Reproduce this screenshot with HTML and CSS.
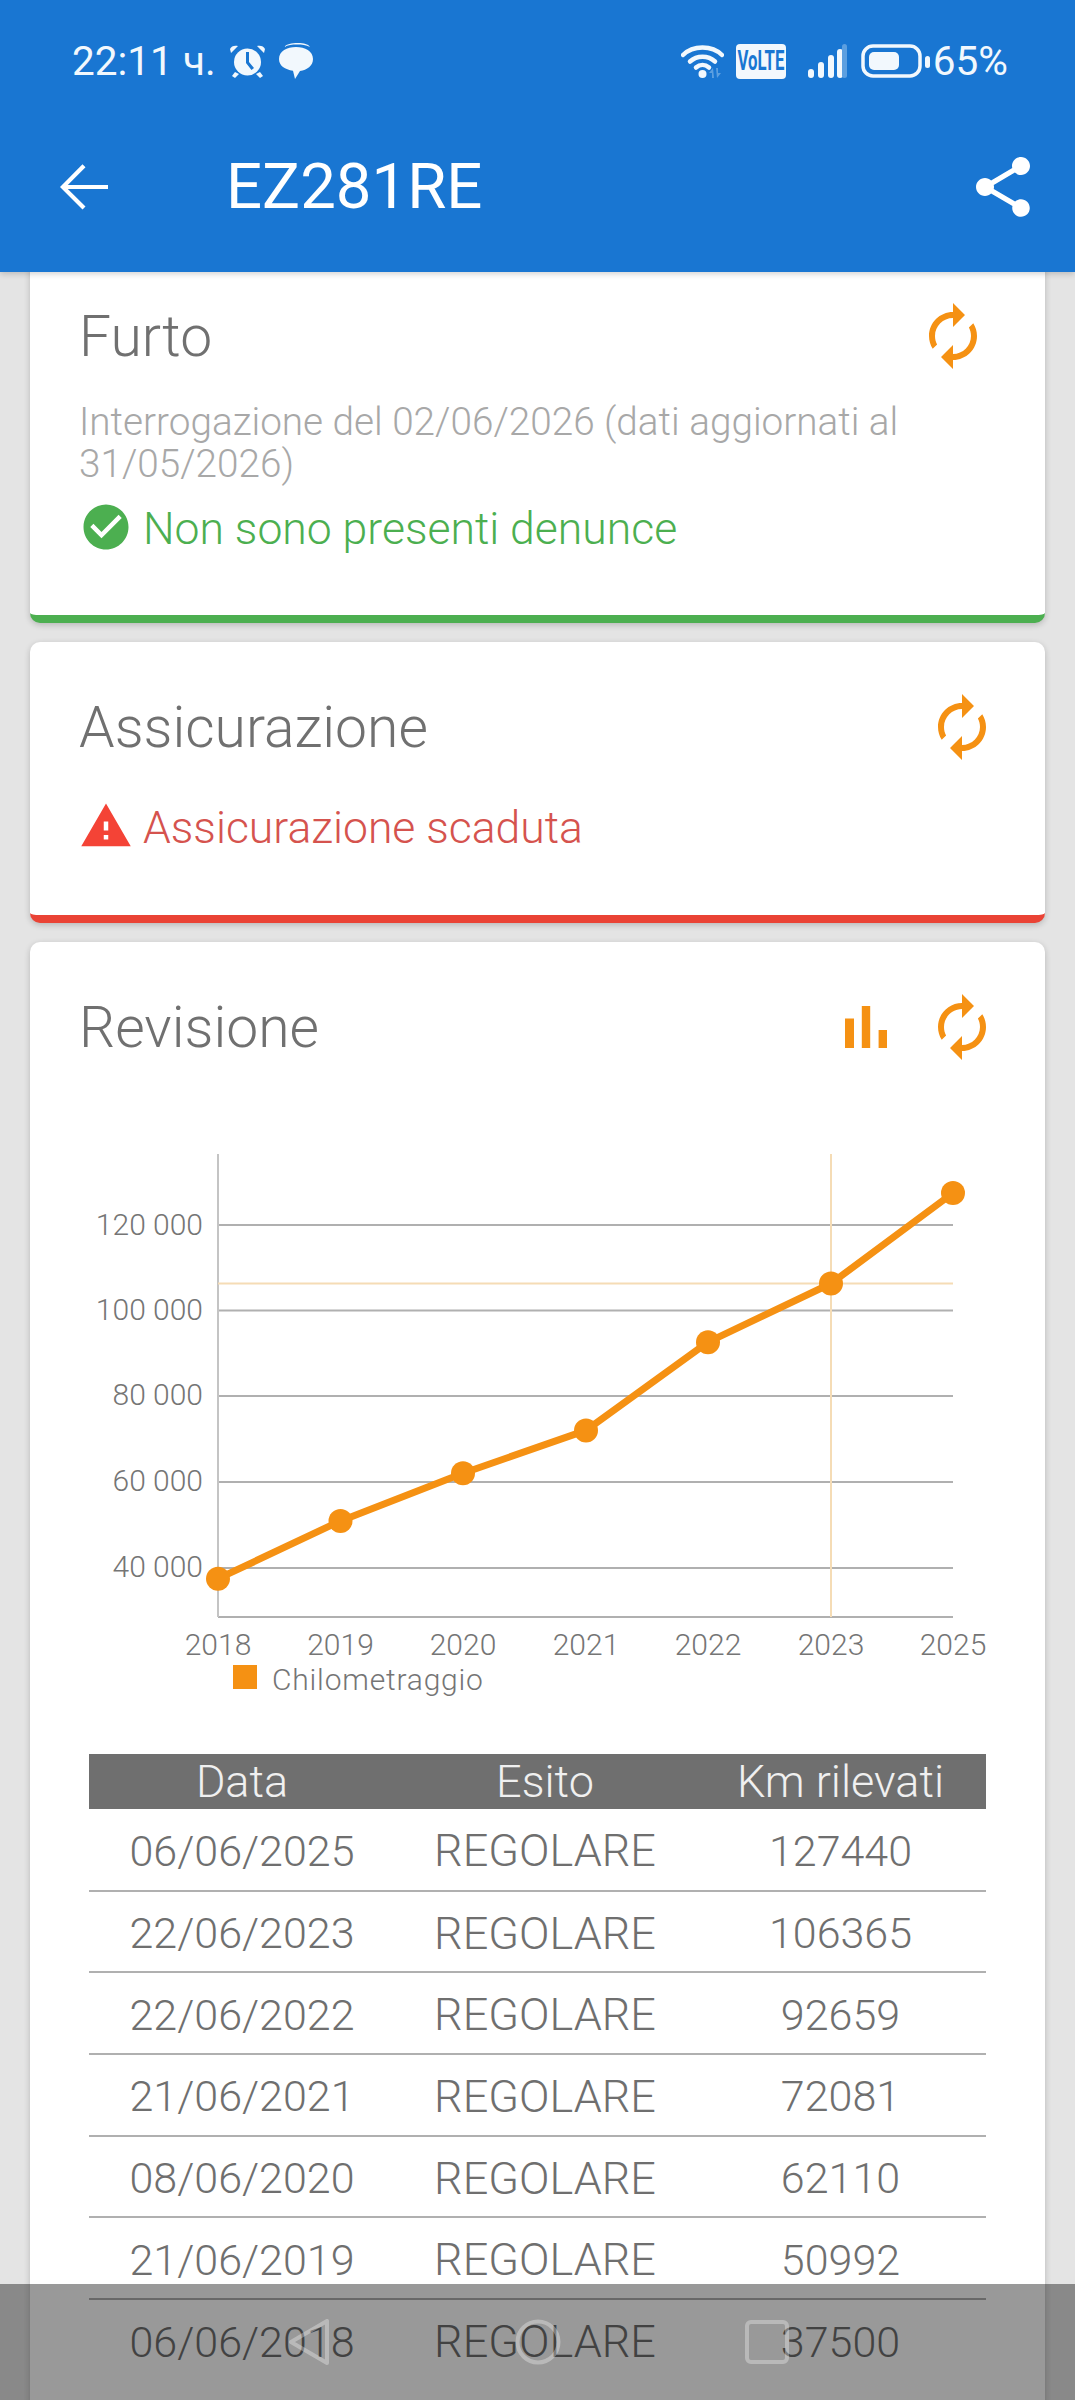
FILE: index.html
```html
<!DOCTYPE html>
<html lang="it">
<head>
<meta charset="utf-8">
<title>EZ281RE</title>
<link rel="stylesheet" href="styles.css">
</head>
<body>
<div class="screen">
  <header class="appbar">
    <div class="statusbar">
      <div class="status-left">
        <span class="status-text">22:11 ч.</span>
        <svg class="ic-alarm" viewBox="0 0 35 34"><path class="w" d="M1 9 8 2c-3-1-7 0-8 3zM34 9l-7-7c3-1 7 0 8 3z"/><circle class="w" cx="17.500" cy="18" r="13.500"/><path class="b" d="M16 8h3v10l5 6-2.500 2-5.500-7z"/><path class="w" d="M5 28l4 2-4 4-3-2zM30 28l-4 2 4 4 3-2z"/></svg>
        <svg class="ic-msg" viewBox="0 0 35 36"><path class="w" d="M6 4C9 1 13 0 20 0c6 0 10 1 12 4-4-2-8-2.500-13-2.500S10 2 6 4z"/><path class="w" d="M18 4c9 0 17 4 17 12 0 7-6 11-13 12l-5 8-2-8.300C7 26.500 1 23 1 16 1 8 9 4 18 4z"/></svg>
      </div>
      <div class="status-right">
        <svg class="ic-wifi" viewBox="0 0 43 34"><path class="wl" d="M2 11C12 1 31 1 41 11"/><path class="wl" d="M9 17.500C16 11 27 11 34 17.500"/><path class="wl" d="M15 23.500C19 20 24 20 28 23.500"/><circle class="w" cx="21.500" cy="30" r="4"/><path class="dim" d="M32 24l-4 5h3v5h2zM36 34l4-5h-3v-5h-2z"/></svg>
        <span class="volte"><span class="volte-text">VoLTE</span></span>
        <svg class="ic-signal" viewBox="0 0 39 34"><rect class="w" x="0" y="25" width="6" height="9" rx="3"/><rect class="w" x="10" y="18" width="6" height="16" rx="3"/><rect class="w" x="20" y="11" width="6" height="23" rx="3"/><rect class="w" x="29" y="5" width="6" height="29" rx="3"/><rect class="dim" x="34" y="0" width="5" height="34" rx="2.500"/></svg>
        <svg class="ic-battery" viewBox="0 0 69 34"><rect class="bl" x="2" y="2" width="57" height="30" rx="10"/><rect class="w" x="8" y="8" width="30" height="18" rx="5"/><rect class="w" x="64" y="12" width="5" height="12" rx="2.500"/></svg>
        <span class="status-text">65%</span>
      </div>
    </div>
    <div class="toolbar">
      <svg class="ic-back" viewBox="0 0 24 24"><path d="M20 11.300H6.600l5.900-5.900-1-1L4 12l7.500 7.500 1-1-5.900-5.800H20z"/></svg>
      <h1 class="plate">EZ281RE</h1>
      <svg class="ic-share" viewBox="0 0 24 24"><path d="M18 16.080c-.76 0-1.440.3-1.960.77L8.910 12.700c.05-.23.09-.46.09-.7s-.04-.47-.09-.7l7.050-4.110c.54.5 1.250.81 2.040.81 1.660 0 3-1.340 3-3s-1.340-3-3-3-3 1.340-3 3c0 .24.04.47.09.7L8.040 9.810C7.500 9.310 6.790 9 6 9c-1.660 0-3 1.340-3 3s1.340 3 3 3c.79 0 1.500-.31 2.040-.81l7.120 4.160c-.05.21-.08.43-.08.65 0 1.610 1.310 2.920 2.920 2.920 1.610 0 2.920-1.310 2.920-2.920s-1.310-2.920-2.920-2.920z"/></svg>
    </div>
  </header>

  <main class="content">
    <section class="card card-ok">
      <div class="card-head card-head-wide">
        <h2 class="card-title">Furto</h2>
        <svg class="ic-action" viewBox="0 0 24 24"><path d="M12 6v3l4-4-4-4v3c-4.420 0-8 3.580-8 8 0 1.570.46 3.030 1.240 4.260L6.700 14.800c-.45-.83-.7-1.790-.7-2.800 0-3.310 2.690-6 6-6zm6.760 1.740L17.300 9.200c.44.84.7 1.790.7 2.800 0 3.310-2.690 6-6 6v-3l-4 4 4 4v-3c4.420 0 8-3.580 8-8 0-1.570-.46-3.030-1.240-4.260z"/></svg>
      </div>
      <p class="card-note">Interrogazione del 02/06/2026 (dati aggiornati al 31/05/2026)</p>
      <div class="state state-ok">
        <svg class="ic-state" viewBox="0 0 24 24"><path d="M12 2C6.480 2 2 6.480 2 12s4.480 10 10 10 10-4.480 10-10S17.520 2 12 2zm-2 15l-5-5 1.410-1.410L10 14.170l7.590-7.590L19 8l-9 9z"/></svg>
        <span class="state-text">Non sono presenti denunce</span>
      </div>
    </section>

    <section class="card card-bad">
      <div class="card-head">
        <h2 class="card-title">Assicurazione</h2>
        <svg class="ic-action" viewBox="0 0 24 24"><path d="M12 6v3l4-4-4-4v3c-4.420 0-8 3.580-8 8 0 1.570.46 3.030 1.240 4.260L6.700 14.800c-.45-.83-.7-1.790-.7-2.800 0-3.310 2.690-6 6-6zm6.760 1.740L17.300 9.200c.44.84.7 1.790.7 2.800 0 3.310-2.690 6-6 6v-3l-4 4 4 4v-3c4.420 0 8-3.580 8-8 0-1.570-.46-3.030-1.240-4.260z"/></svg>
      </div>
      <div class="state state-bad">
        <svg class="ic-state" viewBox="0 0 24 24"><path d="M1 21h22L12 2 1 21zm12-3h-2v-2h2v2zm0-4h-2v-4h2v4z"/></svg>
        <span class="state-text">Assicurazione scaduta</span>
      </div>
    </section>

    <section class="card card-plain">
      <div class="card-head">
        <h2 class="card-title">Revisione</h2>
        <div class="actions">
          <svg class="ic-action" viewBox="0 0 24 24"><path d="M5 9.200h3V19H5zM10.600 5h2.800v14h-2.800zm5.600 8H19v6h-2.800z"/></svg>
          <svg class="ic-action" viewBox="0 0 24 24"><path d="M12 6v3l4-4-4-4v3c-4.420 0-8 3.580-8 8 0 1.570.46 3.030 1.240 4.260L6.700 14.800c-.45-.83-.7-1.790-.7-2.800 0-3.310 2.690-6 6-6zm6.760 1.740L17.300 9.200c.44.84.7 1.790.7 2.800 0 3.310-2.690 6-6 6v-3l-4 4 4 4v-3c4.420 0 8-3.580 8-8 0-1.570-.46-3.030-1.240-4.260z"/></svg>
        </div>
      </div>

      <svg class="chart" viewBox="30 1062 1015 691">
        <g class="grid">
          <line x1="218" x2="953" y1="1224" y2="1224"/>
          <line x1="218" x2="953" y1="1309.500" y2="1309.500"/>
          <line x1="218" x2="953" y1="1395" y2="1395"/>
          <line x1="218" x2="953" y1="1481" y2="1481"/>
          <line x1="218" x2="953" y1="1567" y2="1567"/>
          <line x1="218" x2="953" y1="1616" y2="1616"/>
          <line class="axis-y" x1="218" x2="218" y1="1153" y2="1616"/>
        </g>
        <g class="cross">
          <line x1="218" x2="953" y1="1282.500" y2="1282.500"/>
          <line x1="831" x2="831" y1="1153" y2="1616"/>
        </g>
        <polyline class="series" points="218,1577.700 340.500,1519.900 463,1472.200 586,1429.400 708,1341.200 831,1282.500 953,1192"/>
        <g class="dots">
          <circle cx="218" cy="1577.700" r="12"/>
          <circle cx="340.500" cy="1519.900" r="12"/>
          <circle cx="463" cy="1472.200" r="12"/>
          <circle cx="586" cy="1429.400" r="12"/>
          <circle cx="708" cy="1341.200" r="12"/>
          <circle cx="831" cy="1282.500" r="12"/>
          <circle cx="953" cy="1192" r="12"/>
        </g>
        <g class="labels labels-y">
          <text x="203" y="1234">120 000</text>
          <text x="203" y="1319">100 000</text>
          <text x="203" y="1404">80 000</text>
          <text x="203" y="1490">60 000</text>
          <text x="203" y="1576">40 000</text>
        </g>
        <g class="labels labels-x">
          <text x="218" y="1654">2018</text>
          <text x="340.500" y="1654">2019</text>
          <text x="463" y="1654">2020</text>
          <text x="586" y="1654">2021</text>
          <text x="708" y="1654">2022</text>
          <text x="831" y="1654">2023</text>
          <text x="953" y="1654">2025</text>
        </g>
        <rect class="legend-box" x="233" y="1664" width="24" height="24"/>
        <text class="labels legend-text" x="272" y="1689">Chilometraggio</text>
      </svg>

      <table class="results">
        <thead>
          <tr><th>Data</th><th>Esito</th><th>Km rilevati</th></tr>
        </thead>
        <tbody>
          <tr><td>06/06/2025</td><td class="caps">REGOLARE</td><td>127440</td></tr>
          <tr><td>22/06/2023</td><td class="caps">REGOLARE</td><td>106365</td></tr>
          <tr><td>22/06/2022</td><td class="caps">REGOLARE</td><td>92659</td></tr>
          <tr><td>21/06/2021</td><td class="caps">REGOLARE</td><td>72081</td></tr>
          <tr><td>08/06/2020</td><td class="caps">REGOLARE</td><td>62110</td></tr>
          <tr><td>21/06/2019</td><td class="caps">REGOLARE</td><td>50992</td></tr>
          <tr><td>06/06/2018</td><td class="caps">REGOLARE</td><td>37500</td></tr>
        </tbody>
      </table>
    </section>
  </main>

  <nav class="navbar">
    <svg class="ic-nav" viewBox="0 0 46 46"><path d="M41 2v42L5 23z"/></svg>
    <svg class="ic-nav" viewBox="0 0 46 46"><circle cx="23" cy="23" r="20.500"/></svg>
    <svg class="ic-nav" viewBox="0 0 46 46"><rect x="3" y="3" width="40" height="40" rx="4"/></svg>
  </nav>
</div>
</body>
</html>
```

FILE: styles.css
```css
* { box-sizing: border-box; }

html, body {
  margin: 0;
  height: 2400px;
  overflow: hidden;
}

body {
  background: #e4e4e4;
  font-family: Roboto, "Liberation Sans", sans-serif;
  font-weight: 300;
  color: #757575;
}

.screen {
  position: relative;
  width: 1075px;
  height: 2400px;
  overflow: hidden;
}

/* App bar lies over the scrolled content */
.appbar {
  position: absolute;
  top: 0;
  left: 0;
  right: 0;
  height: 272px;
  padding-top: 39px;
  z-index: 2;
  background: #1976d2;
  color: #fff;
  box-shadow: 0 2px 6px rgba(0, 0, 0, .18);
}

.statusbar {
  display: flex;
  justify-content: space-between;
  align-items: center;
  height: 44px;
  padding: 0 67px 0 72px;
}

.appbar .w { fill: #f2f8fd; }
.appbar .b { fill: #1976d2; }
.appbar .dim { fill: #5c9fe0; }
.appbar .wl { fill: none; stroke: #f2f8fd; stroke-width: 4.500; stroke-linecap: round; }
.appbar .bl { fill: none; stroke: #f2f8fd; stroke-width: 3.500; }

.status-left, .status-right {
  display: flex;
  align-items: center;
}

.status-text {
  font-size: 40.500px;
  font-weight: 400;
  color: #f2f8fd;
  white-space: nowrap;
}

.ic-alarm { width: 35px; height: 34px; margin-left: 14px; }
.ic-msg { width: 35px; height: 36px; margin-left: 13px; }
.ic-wifi { width: 43px; height: 34px; }
.ic-signal { width: 39px; height: 34px; margin-left: 22px; }
.ic-battery { width: 69px; height: 34px; margin-left: 14px; margin-right: 3px; }

.volte {
  display: flex;
  align-items: center;
  justify-content: center;
  width: 50px;
  height: 35px;
  margin-left: 12px;
  border-radius: 4px;
  background: #f2f8fd;
  color: #1976d2;
}

.volte-text {
  font-size: 27px;
  font-weight: 700;
  transform: scaleX(.62);
}

.toolbar {
  display: flex;
  align-items: center;
  height: 72px;
  margin-top: 68px;
  padding: 0 36px 0 48px;
}

.ic-back, .ic-share { width: 72px; height: 72px; fill: #fff; flex: none; }

.plate {
  flex: 1;
  margin: 0 0 0 106px;
  font-size: 63.500px;
  font-weight: 400;
  line-height: 72px;
}

/* Cards */
.content {
  display: flex;
  flex-direction: column;
  gap: 19px;
  padding: 251px 30px 0;
}

.card {
  border-radius: 10px;
  background: #fff;
  box-shadow: 0 2px 6px rgba(0, 0, 0, .2);
  border-bottom: 8px solid transparent;
  flex: none;
}

.card-ok { border-bottom-color: #4caf50; padding-bottom: 61px; }
.card-bad { border-bottom-color: #ea4335; padding-bottom: 62px; }
.card-plain { border-bottom: 0; padding-bottom: 60px; }

.card-head {
  display: flex;
  align-items: center;
  justify-content: space-between;
  padding: 49px 47px 0 49px;
}

.card-head-wide { padding-right: 56px; }

.card-title {
  margin: 0;
  padding-top: 2px;
  font-size: 57px;
  font-weight: 300;
  line-height: 70px;
  color: #707070;
}

.actions { display: flex; gap: 24px; }

.ic-action { width: 72px; height: 72px; fill: #f59113; flex: none; }

.card-note {
  margin: 29px 56px 0 49px;
  font-size: 38.700px;
  line-height: 42px;
  color: #a8a8a8;
}

.state {
  display: flex;
  align-items: center;
  gap: 10px;
  margin: 15px 49px 0;
  height: 54px;
  font-size: 44.500px;
}

.state-text { padding-top: 3px; }

.card-bad .state { margin-top: 36px; }

.ic-state { width: 54px; height: 54px; fill: currentColor; flex: none; }

.state-ok { color: #4caf50; }
.state-bad { color: #d5534e; }
.state-bad .ic-state { fill: #f44336; }

/* Chart */
.chart { display: block; width: 1015px; height: 691px; }

.grid line { stroke: #b0b0b0; stroke-width: 2; }
.grid .axis-y { stroke: #c4c4c4; }
.cross line { stroke: #f5dcb5; stroke-width: 2; }
.series { fill: none; stroke: #f59113; stroke-width: 7; stroke-linejoin: round; }
.dots circle { fill: #f59113; }
.legend-box { fill: #f59113; }

.labels { font-size: 30px; fill: #757575; }
.legend-text { letter-spacing: .8px; }
.labels-y text { text-anchor: end; }
.labels-x text { text-anchor: middle; }

/* Table */
.results {
  width: 897px;
  margin-left: 59px;
  border-collapse: collapse;
  table-layout: fixed;
  text-align: center;
}

.results th:nth-child(1) { width: 306px; }
.results th:nth-child(2) { width: 300px; }

.results th {
  height: 55px;
  padding: 0;
  background: #6f6f6f;
  color: #f0f0f0;
  font-size: 45px;
  font-weight: 300;
}

.results td {
  height: 81.700px;
  padding: 3px 0 0;
  font-size: 43px;
  font-weight: 300;
  color: #6f6f6f;
}

.results td.caps { font-size: 45px; }

.results tbody tr + tr td { border-top: 2px solid #b0b0b0; }

/* System navigation bar lies over the content */
.navbar {
  position: absolute;
  left: 0;
  right: 0;
  bottom: 0;
  height: 116px;
  z-index: 3;
  display: flex;
  justify-content: center;
  gap: 183px;
  padding-top: 35px;
  background: rgba(0, 0, 0, .4);
}

.ic-nav {
  width: 46px;
  height: 46px;
  fill: none;
  stroke: rgba(255, 255, 255, .32);
  stroke-width: 4;
  stroke-linejoin: round;
}
```
